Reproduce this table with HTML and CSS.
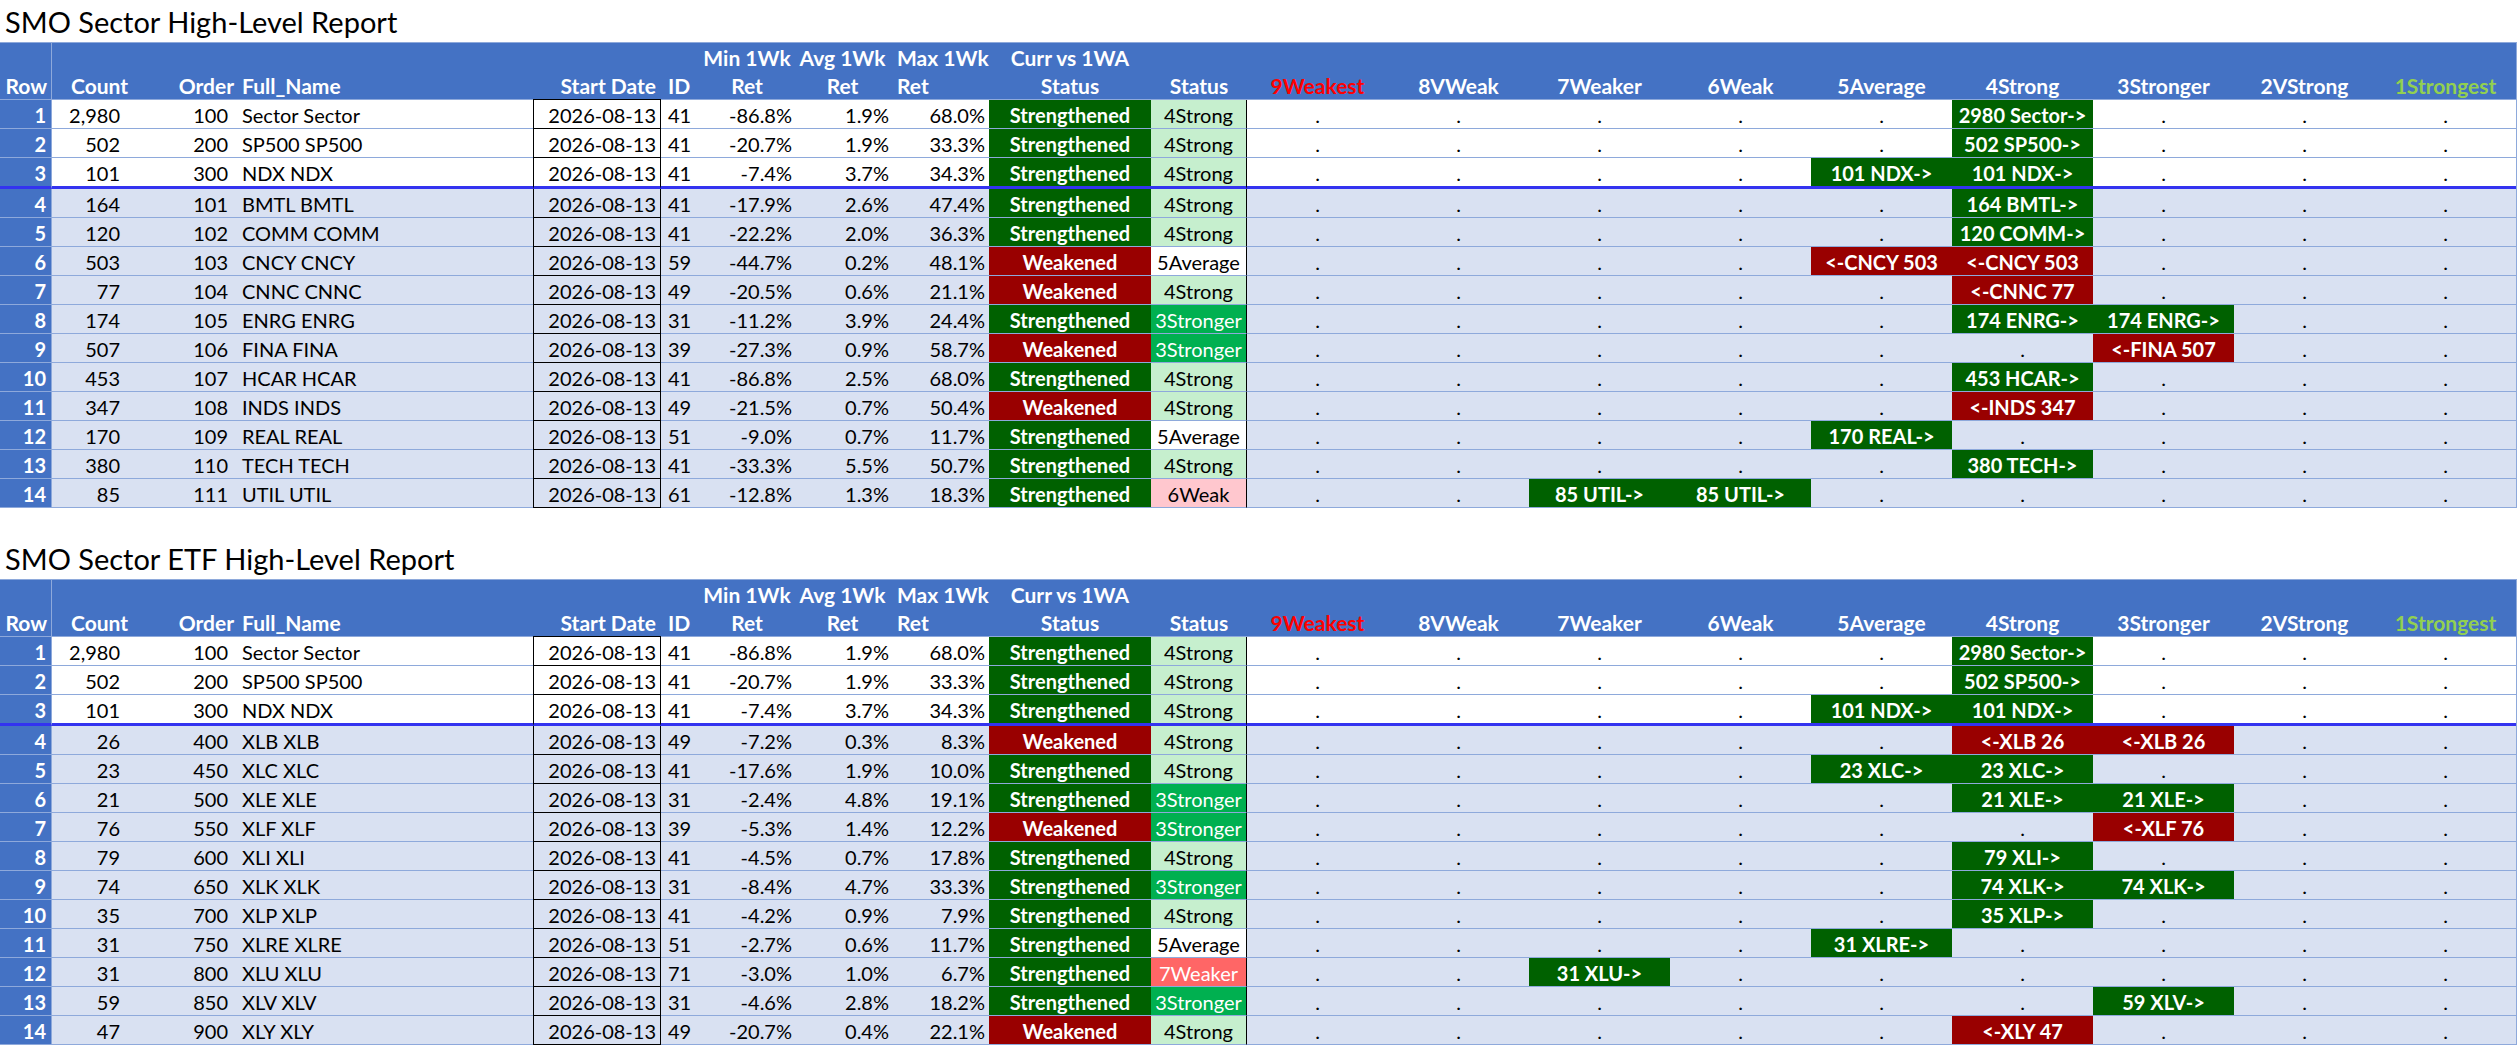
FILE: index.html
```html
<!DOCTYPE html>
<html lang="en">
<head>
<meta charset="utf-8">
<title>SMO Sector High-Level Report</title>
<link rel="stylesheet" href="styles.css">
</head>
<body>
<section class="report">
<h1 class="title">SMO Sector High-Level Report</h1>
<table class="grid">
<colgroup>
<col class="w-rn"><col class="w-cnt"><col class="w-ord"><col class="w-nm"><col class="w-dt"><col class="w-id"><col class="w-mn"><col class="w-av"><col class="w-mx"><col class="w-st"><col class="w-s2">
<col class="w-k"><col class="w-k"><col class="w-k"><col class="w-k"><col class="w-k"><col class="w-k"><col class="w-k"><col class="w-k"><col class="w-k">
</colgroup>
<thead>
<tr>
<th class="rn"><span class="l1"></span><span class="l2">Row</span></th>
<th class="cnt"><span class="l1"></span><span class="l2">Count</span></th>
<th class="ord"><span class="l1"></span><span class="l2">Order</span></th>
<th class="nm"><span class="l1"></span><span class="l2">Full_Name</span></th>
<th class="dt"><span class="l1"></span><span class="l2">Start Date</span></th>
<th class="id"><span class="l1"></span><span class="l2">ID</span></th>
<th class="mn"><span class="l1">Min 1Wk</span><span class="l2">Ret</span></th>
<th class="av"><span class="l1">Avg 1Wk</span><span class="l2">Ret</span></th>
<th class="mx"><span class="l1">Max 1Wk</span><span class="l2">Ret</span></th>
<th class="st"><span class="l1">Curr vs 1WA</span><span class="l2">Status</span></th>
<th class="s2"><span class="l1"></span><span class="l2">Status</span></th>
<th class="k weakest"><span class="l1"></span><span class="l2">9Weakest</span></th>
<th class="k"><span class="l1"></span><span class="l2">8VWeak</span></th>
<th class="k"><span class="l1"></span><span class="l2">7Weaker</span></th>
<th class="k"><span class="l1"></span><span class="l2">6Weak</span></th>
<th class="k"><span class="l1"></span><span class="l2">5Average</span></th>
<th class="k"><span class="l1"></span><span class="l2">4Strong</span></th>
<th class="k"><span class="l1"></span><span class="l2">3Stronger</span></th>
<th class="k"><span class="l1"></span><span class="l2">2VStrong</span></th>
<th class="k strongest"><span class="l1"></span><span class="l2">1Strongest</span></th>
</tr>
</thead>
<tbody>
<tr class="top"><td class="rn">1</td><td class="cnt">2,980</td><td class="ord">100</td><td class="nm">Sector Sector</td><td class="dt">2026-08-13</td><td class="id">41</td><td class="mn">-86.8%</td><td class="av">1.9%</td><td class="mx">68.0%</td><td class="st up">Strengthened</td><td class="s2 s4">4Strong</td><td class="k">.</td><td class="k">.</td><td class="k">.</td><td class="k">.</td><td class="k">.</td><td class="k g">2980 Sector-&gt;</td><td class="k">.</td><td class="k">.</td><td class="k">.</td></tr>
<tr class="top"><td class="rn">2</td><td class="cnt">502</td><td class="ord">200</td><td class="nm">SP500 SP500</td><td class="dt">2026-08-13</td><td class="id">41</td><td class="mn">-20.7%</td><td class="av">1.9%</td><td class="mx">33.3%</td><td class="st up">Strengthened</td><td class="s2 s4">4Strong</td><td class="k">.</td><td class="k">.</td><td class="k">.</td><td class="k">.</td><td class="k">.</td><td class="k g">502 SP500-&gt;</td><td class="k">.</td><td class="k">.</td><td class="k">.</td></tr>
<tr class="top sep"><td class="rn">3</td><td class="cnt">101</td><td class="ord">300</td><td class="nm">NDX NDX</td><td class="dt">2026-08-13</td><td class="id">41</td><td class="mn">-7.4%</td><td class="av">3.7%</td><td class="mx">34.3%</td><td class="st up">Strengthened</td><td class="s2 s4">4Strong</td><td class="k">.</td><td class="k">.</td><td class="k">.</td><td class="k">.</td><td class="k g">101 NDX-&gt;</td><td class="k g">101 NDX-&gt;</td><td class="k">.</td><td class="k">.</td><td class="k">.</td></tr>
<tr><td class="rn">4</td><td class="cnt">164</td><td class="ord">101</td><td class="nm">BMTL BMTL</td><td class="dt">2026-08-13</td><td class="id">41</td><td class="mn">-17.9%</td><td class="av">2.6%</td><td class="mx">47.4%</td><td class="st up">Strengthened</td><td class="s2 s4">4Strong</td><td class="k">.</td><td class="k">.</td><td class="k">.</td><td class="k">.</td><td class="k">.</td><td class="k g">164 BMTL-&gt;</td><td class="k">.</td><td class="k">.</td><td class="k">.</td></tr>
<tr><td class="rn">5</td><td class="cnt">120</td><td class="ord">102</td><td class="nm">COMM COMM</td><td class="dt">2026-08-13</td><td class="id">41</td><td class="mn">-22.2%</td><td class="av">2.0%</td><td class="mx">36.3%</td><td class="st up">Strengthened</td><td class="s2 s4">4Strong</td><td class="k">.</td><td class="k">.</td><td class="k">.</td><td class="k">.</td><td class="k">.</td><td class="k g">120 COMM-&gt;</td><td class="k">.</td><td class="k">.</td><td class="k">.</td></tr>
<tr><td class="rn">6</td><td class="cnt">503</td><td class="ord">103</td><td class="nm">CNCY CNCY</td><td class="dt">2026-08-13</td><td class="id">59</td><td class="mn">-44.7%</td><td class="av">0.2%</td><td class="mx">48.1%</td><td class="st dn">Weakened</td><td class="s2 s5">5Average</td><td class="k">.</td><td class="k">.</td><td class="k">.</td><td class="k">.</td><td class="k r">&lt;-CNCY 503</td><td class="k r">&lt;-CNCY 503</td><td class="k">.</td><td class="k">.</td><td class="k">.</td></tr>
<tr><td class="rn">7</td><td class="cnt">77</td><td class="ord">104</td><td class="nm">CNNC CNNC</td><td class="dt">2026-08-13</td><td class="id">49</td><td class="mn">-20.5%</td><td class="av">0.6%</td><td class="mx">21.1%</td><td class="st dn">Weakened</td><td class="s2 s4">4Strong</td><td class="k">.</td><td class="k">.</td><td class="k">.</td><td class="k">.</td><td class="k">.</td><td class="k r">&lt;-CNNC 77</td><td class="k">.</td><td class="k">.</td><td class="k">.</td></tr>
<tr><td class="rn">8</td><td class="cnt">174</td><td class="ord">105</td><td class="nm">ENRG ENRG</td><td class="dt">2026-08-13</td><td class="id">31</td><td class="mn">-11.2%</td><td class="av">3.9%</td><td class="mx">24.4%</td><td class="st up">Strengthened</td><td class="s2 s3">3Stronger</td><td class="k">.</td><td class="k">.</td><td class="k">.</td><td class="k">.</td><td class="k">.</td><td class="k g">174 ENRG-&gt;</td><td class="k g">174 ENRG-&gt;</td><td class="k">.</td><td class="k">.</td></tr>
<tr><td class="rn">9</td><td class="cnt">507</td><td class="ord">106</td><td class="nm">FINA FINA</td><td class="dt">2026-08-13</td><td class="id">39</td><td class="mn">-27.3%</td><td class="av">0.9%</td><td class="mx">58.7%</td><td class="st dn">Weakened</td><td class="s2 s3">3Stronger</td><td class="k">.</td><td class="k">.</td><td class="k">.</td><td class="k">.</td><td class="k">.</td><td class="k">.</td><td class="k r">&lt;-FINA 507</td><td class="k">.</td><td class="k">.</td></tr>
<tr><td class="rn">10</td><td class="cnt">453</td><td class="ord">107</td><td class="nm">HCAR HCAR</td><td class="dt">2026-08-13</td><td class="id">41</td><td class="mn">-86.8%</td><td class="av">2.5%</td><td class="mx">68.0%</td><td class="st up">Strengthened</td><td class="s2 s4">4Strong</td><td class="k">.</td><td class="k">.</td><td class="k">.</td><td class="k">.</td><td class="k">.</td><td class="k g">453 HCAR-&gt;</td><td class="k">.</td><td class="k">.</td><td class="k">.</td></tr>
<tr><td class="rn">11</td><td class="cnt">347</td><td class="ord">108</td><td class="nm">INDS INDS</td><td class="dt">2026-08-13</td><td class="id">49</td><td class="mn">-21.5%</td><td class="av">0.7%</td><td class="mx">50.4%</td><td class="st dn">Weakened</td><td class="s2 s4">4Strong</td><td class="k">.</td><td class="k">.</td><td class="k">.</td><td class="k">.</td><td class="k">.</td><td class="k r">&lt;-INDS 347</td><td class="k">.</td><td class="k">.</td><td class="k">.</td></tr>
<tr><td class="rn">12</td><td class="cnt">170</td><td class="ord">109</td><td class="nm">REAL REAL</td><td class="dt">2026-08-13</td><td class="id">51</td><td class="mn">-9.0%</td><td class="av">0.7%</td><td class="mx">11.7%</td><td class="st up">Strengthened</td><td class="s2 s5">5Average</td><td class="k">.</td><td class="k">.</td><td class="k">.</td><td class="k">.</td><td class="k g">170 REAL-&gt;</td><td class="k">.</td><td class="k">.</td><td class="k">.</td><td class="k">.</td></tr>
<tr><td class="rn">13</td><td class="cnt">380</td><td class="ord">110</td><td class="nm">TECH TECH</td><td class="dt">2026-08-13</td><td class="id">41</td><td class="mn">-33.3%</td><td class="av">5.5%</td><td class="mx">50.7%</td><td class="st up">Strengthened</td><td class="s2 s4">4Strong</td><td class="k">.</td><td class="k">.</td><td class="k">.</td><td class="k">.</td><td class="k">.</td><td class="k g">380 TECH-&gt;</td><td class="k">.</td><td class="k">.</td><td class="k">.</td></tr>
<tr><td class="rn">14</td><td class="cnt">85</td><td class="ord">111</td><td class="nm">UTIL UTIL</td><td class="dt">2026-08-13</td><td class="id">61</td><td class="mn">-12.8%</td><td class="av">1.3%</td><td class="mx">18.3%</td><td class="st up">Strengthened</td><td class="s2 s6">6Weak</td><td class="k">.</td><td class="k">.</td><td class="k g">85 UTIL-&gt;</td><td class="k g">85 UTIL-&gt;</td><td class="k">.</td><td class="k">.</td><td class="k">.</td><td class="k">.</td><td class="k">.</td></tr>
</tbody>
</table>
</section>

<section class="report">
<h1 class="title">SMO Sector ETF High-Level Report</h1>
<table class="grid">
<colgroup>
<col class="w-rn"><col class="w-cnt"><col class="w-ord"><col class="w-nm"><col class="w-dt"><col class="w-id"><col class="w-mn"><col class="w-av"><col class="w-mx"><col class="w-st"><col class="w-s2">
<col class="w-k"><col class="w-k"><col class="w-k"><col class="w-k"><col class="w-k"><col class="w-k"><col class="w-k"><col class="w-k"><col class="w-k">
</colgroup>
<thead>
<tr>
<th class="rn"><span class="l1"></span><span class="l2">Row</span></th>
<th class="cnt"><span class="l1"></span><span class="l2">Count</span></th>
<th class="ord"><span class="l1"></span><span class="l2">Order</span></th>
<th class="nm"><span class="l1"></span><span class="l2">Full_Name</span></th>
<th class="dt"><span class="l1"></span><span class="l2">Start Date</span></th>
<th class="id"><span class="l1"></span><span class="l2">ID</span></th>
<th class="mn"><span class="l1">Min 1Wk</span><span class="l2">Ret</span></th>
<th class="av"><span class="l1">Avg 1Wk</span><span class="l2">Ret</span></th>
<th class="mx"><span class="l1">Max 1Wk</span><span class="l2">Ret</span></th>
<th class="st"><span class="l1">Curr vs 1WA</span><span class="l2">Status</span></th>
<th class="s2"><span class="l1"></span><span class="l2">Status</span></th>
<th class="k weakest"><span class="l1"></span><span class="l2">9Weakest</span></th>
<th class="k"><span class="l1"></span><span class="l2">8VWeak</span></th>
<th class="k"><span class="l1"></span><span class="l2">7Weaker</span></th>
<th class="k"><span class="l1"></span><span class="l2">6Weak</span></th>
<th class="k"><span class="l1"></span><span class="l2">5Average</span></th>
<th class="k"><span class="l1"></span><span class="l2">4Strong</span></th>
<th class="k"><span class="l1"></span><span class="l2">3Stronger</span></th>
<th class="k"><span class="l1"></span><span class="l2">2VStrong</span></th>
<th class="k strongest"><span class="l1"></span><span class="l2">1Strongest</span></th>
</tr>
</thead>
<tbody>
<tr class="top"><td class="rn">1</td><td class="cnt">2,980</td><td class="ord">100</td><td class="nm">Sector Sector</td><td class="dt">2026-08-13</td><td class="id">41</td><td class="mn">-86.8%</td><td class="av">1.9%</td><td class="mx">68.0%</td><td class="st up">Strengthened</td><td class="s2 s4">4Strong</td><td class="k">.</td><td class="k">.</td><td class="k">.</td><td class="k">.</td><td class="k">.</td><td class="k g">2980 Sector-&gt;</td><td class="k">.</td><td class="k">.</td><td class="k">.</td></tr>
<tr class="top"><td class="rn">2</td><td class="cnt">502</td><td class="ord">200</td><td class="nm">SP500 SP500</td><td class="dt">2026-08-13</td><td class="id">41</td><td class="mn">-20.7%</td><td class="av">1.9%</td><td class="mx">33.3%</td><td class="st up">Strengthened</td><td class="s2 s4">4Strong</td><td class="k">.</td><td class="k">.</td><td class="k">.</td><td class="k">.</td><td class="k">.</td><td class="k g">502 SP500-&gt;</td><td class="k">.</td><td class="k">.</td><td class="k">.</td></tr>
<tr class="top sep"><td class="rn">3</td><td class="cnt">101</td><td class="ord">300</td><td class="nm">NDX NDX</td><td class="dt">2026-08-13</td><td class="id">41</td><td class="mn">-7.4%</td><td class="av">3.7%</td><td class="mx">34.3%</td><td class="st up">Strengthened</td><td class="s2 s4">4Strong</td><td class="k">.</td><td class="k">.</td><td class="k">.</td><td class="k">.</td><td class="k g">101 NDX-&gt;</td><td class="k g">101 NDX-&gt;</td><td class="k">.</td><td class="k">.</td><td class="k">.</td></tr>
<tr><td class="rn">4</td><td class="cnt">26</td><td class="ord">400</td><td class="nm">XLB XLB</td><td class="dt">2026-08-13</td><td class="id">49</td><td class="mn">-7.2%</td><td class="av">0.3%</td><td class="mx">8.3%</td><td class="st dn">Weakened</td><td class="s2 s4">4Strong</td><td class="k">.</td><td class="k">.</td><td class="k">.</td><td class="k">.</td><td class="k">.</td><td class="k r">&lt;-XLB 26</td><td class="k r">&lt;-XLB 26</td><td class="k">.</td><td class="k">.</td></tr>
<tr><td class="rn">5</td><td class="cnt">23</td><td class="ord">450</td><td class="nm">XLC XLC</td><td class="dt">2026-08-13</td><td class="id">41</td><td class="mn">-17.6%</td><td class="av">1.9%</td><td class="mx">10.0%</td><td class="st up">Strengthened</td><td class="s2 s4">4Strong</td><td class="k">.</td><td class="k">.</td><td class="k">.</td><td class="k">.</td><td class="k g">23 XLC-&gt;</td><td class="k g">23 XLC-&gt;</td><td class="k">.</td><td class="k">.</td><td class="k">.</td></tr>
<tr><td class="rn">6</td><td class="cnt">21</td><td class="ord">500</td><td class="nm">XLE XLE</td><td class="dt">2026-08-13</td><td class="id">31</td><td class="mn">-2.4%</td><td class="av">4.8%</td><td class="mx">19.1%</td><td class="st up">Strengthened</td><td class="s2 s3">3Stronger</td><td class="k">.</td><td class="k">.</td><td class="k">.</td><td class="k">.</td><td class="k">.</td><td class="k g">21 XLE-&gt;</td><td class="k g">21 XLE-&gt;</td><td class="k">.</td><td class="k">.</td></tr>
<tr><td class="rn">7</td><td class="cnt">76</td><td class="ord">550</td><td class="nm">XLF XLF</td><td class="dt">2026-08-13</td><td class="id">39</td><td class="mn">-5.3%</td><td class="av">1.4%</td><td class="mx">12.2%</td><td class="st dn">Weakened</td><td class="s2 s3">3Stronger</td><td class="k">.</td><td class="k">.</td><td class="k">.</td><td class="k">.</td><td class="k">.</td><td class="k">.</td><td class="k r">&lt;-XLF 76</td><td class="k">.</td><td class="k">.</td></tr>
<tr><td class="rn">8</td><td class="cnt">79</td><td class="ord">600</td><td class="nm">XLI XLI</td><td class="dt">2026-08-13</td><td class="id">41</td><td class="mn">-4.5%</td><td class="av">0.7%</td><td class="mx">17.8%</td><td class="st up">Strengthened</td><td class="s2 s4">4Strong</td><td class="k">.</td><td class="k">.</td><td class="k">.</td><td class="k">.</td><td class="k">.</td><td class="k g">79 XLI-&gt;</td><td class="k">.</td><td class="k">.</td><td class="k">.</td></tr>
<tr><td class="rn">9</td><td class="cnt">74</td><td class="ord">650</td><td class="nm">XLK XLK</td><td class="dt">2026-08-13</td><td class="id">31</td><td class="mn">-8.4%</td><td class="av">4.7%</td><td class="mx">33.3%</td><td class="st up">Strengthened</td><td class="s2 s3">3Stronger</td><td class="k">.</td><td class="k">.</td><td class="k">.</td><td class="k">.</td><td class="k">.</td><td class="k g">74 XLK-&gt;</td><td class="k g">74 XLK-&gt;</td><td class="k">.</td><td class="k">.</td></tr>
<tr><td class="rn">10</td><td class="cnt">35</td><td class="ord">700</td><td class="nm">XLP XLP</td><td class="dt">2026-08-13</td><td class="id">41</td><td class="mn">-4.2%</td><td class="av">0.9%</td><td class="mx">7.9%</td><td class="st up">Strengthened</td><td class="s2 s4">4Strong</td><td class="k">.</td><td class="k">.</td><td class="k">.</td><td class="k">.</td><td class="k">.</td><td class="k g">35 XLP-&gt;</td><td class="k">.</td><td class="k">.</td><td class="k">.</td></tr>
<tr><td class="rn">11</td><td class="cnt">31</td><td class="ord">750</td><td class="nm">XLRE XLRE</td><td class="dt">2026-08-13</td><td class="id">51</td><td class="mn">-2.7%</td><td class="av">0.6%</td><td class="mx">11.7%</td><td class="st up">Strengthened</td><td class="s2 s5">5Average</td><td class="k">.</td><td class="k">.</td><td class="k">.</td><td class="k">.</td><td class="k g">31 XLRE-&gt;</td><td class="k">.</td><td class="k">.</td><td class="k">.</td><td class="k">.</td></tr>
<tr><td class="rn">12</td><td class="cnt">31</td><td class="ord">800</td><td class="nm">XLU XLU</td><td class="dt">2026-08-13</td><td class="id">71</td><td class="mn">-3.0%</td><td class="av">1.0%</td><td class="mx">6.7%</td><td class="st up">Strengthened</td><td class="s2 s7">7Weaker</td><td class="k">.</td><td class="k">.</td><td class="k g">31 XLU-&gt;</td><td class="k">.</td><td class="k">.</td><td class="k">.</td><td class="k">.</td><td class="k">.</td><td class="k">.</td></tr>
<tr><td class="rn">13</td><td class="cnt">59</td><td class="ord">850</td><td class="nm">XLV XLV</td><td class="dt">2026-08-13</td><td class="id">31</td><td class="mn">-4.6%</td><td class="av">2.8%</td><td class="mx">18.2%</td><td class="st up">Strengthened</td><td class="s2 s3">3Stronger</td><td class="k">.</td><td class="k">.</td><td class="k">.</td><td class="k">.</td><td class="k">.</td><td class="k">.</td><td class="k g">59 XLV-&gt;</td><td class="k">.</td><td class="k">.</td></tr>
<tr><td class="rn">14</td><td class="cnt">47</td><td class="ord">900</td><td class="nm">XLY XLY</td><td class="dt">2026-08-13</td><td class="id">49</td><td class="mn">-20.7%</td><td class="av">0.4%</td><td class="mx">22.1%</td><td class="st dn">Weakened</td><td class="s2 s4">4Strong</td><td class="k">.</td><td class="k">.</td><td class="k">.</td><td class="k">.</td><td class="k">.</td><td class="k r">&lt;-XLY 47</td><td class="k">.</td><td class="k">.</td><td class="k">.</td></tr>
</tbody>
</table>
</section>
</body>
</html>
```

FILE: styles.css
```css
* { box-sizing: border-box; }
html { overflow: hidden; }
body {
  margin: 0;
  width: 2517px;
  background: #ffffff;
  color: #000000;
  font-family: Lato, "Open Sans", "Liberation Sans", sans-serif;
}

.report + .report { margin-top: 29px; }

.title {
  margin: 0;
  height: 42px;
  padding: 7px 0 0 5px;
  font-size: 29px;
  line-height: 29px;
  font-weight: 400;
  white-space: nowrap;
}

.grid {
  width: 2517px;
  table-layout: fixed;
  border-collapse: separate;
  border-spacing: 0;
  border-top: 1px solid #8ea9db;
  border-right: 1px solid #8ea9db;
}

.w-rn { width: 52px; }
.w-cnt { width: 84px; }
.w-ord { width: 100px; }
.w-nm { width: 297px; }
.w-dt { width: 128px; }
.w-id { width: 39px; }
.w-mn { width: 94px; }
.w-av { width: 97px; }
.w-mx { width: 98px; }
.w-st { width: 162px; }
.w-s2 { width: 96px; }
.w-k { width: 141px; }

/* header */
.grid th {
  padding: 0;
  background: #4472c4;
  color: #ffffff;
  font-weight: 700;
  font-size: 21px;
  vertical-align: top;
  white-space: nowrap;
  border-bottom: 1px solid #8ea9db;
  text-align: center;
}
.l1, .l2 { display: block; }
.l1 { height: 29px; line-height: 29px; }
.l2 { height: 27px; line-height: 26px; padding-top: 1px; }

.grid th.rn { text-align: right; padding-right: 4px; border-right: 1px solid #8ea9db; }
.grid th.cnt { text-align: left; padding-left: 19px; }
.grid th.ord { text-align: right; padding-right: 2px; }
.grid th.nm { text-align: left; padding-left: 6px; }
.grid th.dt { text-align: right; padding-right: 5px; border-bottom-color: #000000; }
.grid th.id { text-align: left; padding-left: 7px; }
.grid th.mx { text-align: left; padding-left: 6px; }
.grid th.weakest { color: #ff0000; }
.grid th.strongest { color: #92d050; }

/* body cells: row backgrounds first, cell fills after (same specificity, later wins) */
.grid td {
  padding: 2px 0 0 0;
  font-size: 20px;
  line-height: 26px;
  white-space: nowrap;
  overflow: hidden;
  background: #d9e1f2;
  border-bottom: 1px solid #8ea9db;
}
.grid .top td { background: #ffffff; }

.grid td.rn {
  background: #4472c4;
  color: #ffffff;
  font-weight: 700;
  text-align: right;
  padding-right: 5px;
  border-right: 1px solid #8ea9db;
}
.grid td.cnt { text-align: right; padding-right: 16px; }
.grid td.ord { text-align: right; padding-right: 8px; }
.grid td.nm { text-align: left; padding-left: 6px; }
.grid td.dt {
  text-align: right;
  padding-right: 4px;
  border-left: 1px solid #000000;
  border-right: 1px solid #000000;
  border-bottom-color: #000000;
}
.grid td.id { text-align: left; padding-left: 7px; }
.grid td.mn { text-align: right; padding-right: 2px; }
.grid td.av { text-align: right; padding-right: 2px; }
.grid td.mx { text-align: right; padding-right: 4px; }

.grid td.st {
  text-align: center;
  color: #ffffff;
  font-weight: 700;
}
.grid td.up { background: #006100; }
.grid td.dn { background: #990000; }

.grid td.s2 { text-align: center; border-right: 1px solid #000000; }
.grid td.s3 { background: #00b050; color: #ffffff; }
.grid td.s4 { background: #c6efce; color: #000000; }
.grid td.s5 { background: #ffffff; color: #000000; }
.grid td.s6 { background: #ffc7ce; color: #000000; }
.grid td.s7 { background: #ff6666; color: #ffffff; }

.grid td.k { text-align: center; }
.grid td.g { background: #006100; color: #ffffff; font-weight: 700; }
.grid td.r { background: #990000; color: #ffffff; font-weight: 700; }

.grid tr.sep td { border-bottom: 3px solid #3333f0; }
```
